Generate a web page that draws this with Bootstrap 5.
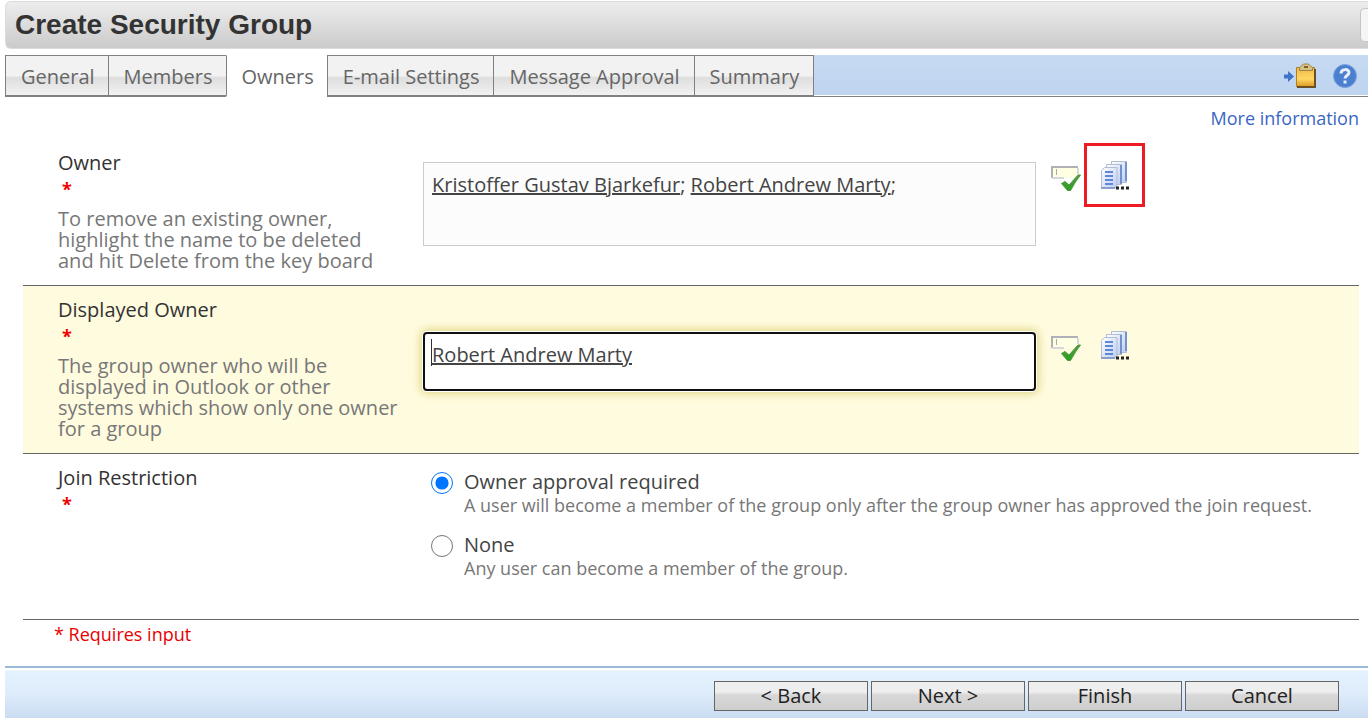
<!DOCTYPE html>
<html lang="en">
<head>
<meta charset="utf-8">
<meta name="viewport" content="width=device-width, initial-scale=1">
<title>Create Security Group</title>
<link href="https://cdn.jsdelivr.net/npm/bootstrap@5.3.0/dist/css/bootstrap.min.css" rel="stylesheet">
<style>
  body { font-family: "Segoe UI", "Open Sans", "Noto Sans", sans-serif; font-size: 20px; line-height: 21px; color: #333; background: #fff; }
  .title-bar { margin: 1px 0 0 5px; height: 48px; border: 1px solid #dcdcdc; border-right: 0; border-radius: 6px 0 0 6px; background: linear-gradient(#ededed, #cbcbcb); }
  .title-bar h1 { font: bold 28px/46px "Liberation Sans", Arial, sans-serif; color: #333; padding-left: 9px; }
  .edge-btn { width: 8px; height: 34px; background: #f5f5f5; border: 1px solid #c4c4c4; border-right: 0; border-radius: 5px 0 0 5px; }
  .tab-strip { margin: 6px 0 0 5px; height: 42px; background: linear-gradient(#c6daf3, #bfd4ef 90%); border-bottom: 1px solid #808080; box-shadow: inset 0 -1px #fff; }
  .tab-strip .nav-link { height: 42px; padding: 0 14px 0 15px; border: 1px solid #808080; border-right: 0; border-bottom-width: 2px; border-radius: 0; font-size: 20px; line-height: 42px; color: #666; white-space: nowrap; background: linear-gradient(#f2f2f2 50%, #dedede 56%, #f2f2f2); }
  .tab-strip .short .nav-link { padding-right: 13px; }
  .tab-strip .nav-item:last-child .nav-link { border-right: 1px solid #808080; }
  .tab-strip .nav-link.active { background: #fff; border-top-color: #fff; border-bottom-color: #fff; }
  .tab-tools { gap: 16px; padding-right: 11px; }
  .icon-btn { border: 0; background: none; padding: 0; line-height: 0; }
  .more-info { height: 42px; line-height: 42px; font-size: 18px; padding-right: 9px; }
  .more-info a { color: #3a66c4; text-decoration: none; }
  .form-rows { margin: 0 9px 0 23px; }
  .form-item { border-bottom: 1px solid #666; }
  .form-item.current { background: #fffbdf; }
  .item-label { flex: 0 0 400px; padding: 13px 24px 14px 35px; }
  .star { color: #f00000; font: bold 18px/32px "Open Sans", sans-serif; margin-bottom: 3px; padding-left: 4px; }
  .hint { color: #777; }
  .picker { padding: 4px 16% 0 0; }
  .current .picker { padding-top: 27px; }
  .field { margin-top: 19px; padding: 11px 8px; height: 84px; border: 1px solid #ccc; background: #fcfcfc; color: #444; }
  .current .field { height: 59px; padding: 10px 7px; border: 2px solid #101010; border-radius: 4px; background: #fff; box-shadow: 0 0 0 1px #fff, 0 0 9px 3px #e2d98a; outline: 0; resize: none; overflow: hidden; text-decoration: underline; display: block; width: 100%; }
  .caret { left: 8px; top: 26px; width: 1px; height: 27px; background: #333; }
  .check-btn { margin: 22px 0 0 15px; height: 28px; }
  .pick-btn { margin-left: 3px; width: 61px; height: 64px; border: 3px solid transparent; }
  .pick-btn.marked { border-color: #ed1c24; }
  .choices { padding: 17px 16px 22px 8px; }
  .choices input { width: 22px; height: 22px; margin: 1px 0 0; accent-color: #0075ff; }
  .choice { gap: 0 11px; height: 63px; }
  .choice label { color: #444; line-height: 22px; }
  .choice p { margin: 2px 0 0; font-size: 18px; color: #777; line-height: 21px; }
  .required-note { color: #e80000; font-size: 18px; line-height: 28px; padding-left: 31px; }
  .button-bar { margin-left: 5px; height: 52px; padding: 6px 29px 0 0; gap: 3px; border-top: 2px solid #9db9da; background: linear-gradient(#fff 2px, #e4f1fe 3px, #deecfb 50%, #cbdcf2); }
  .button-bar .btn { width: 154px; height: 30px; padding: 0; border: 1px solid #666; border-radius: 0; font-size: 20px; line-height: 28px; color: #222; background: linear-gradient(#eee 36%, #d8d8d8 46%, #cecece); }
</style>
</head>
<body class="d-flex flex-column min-vh-100">
<svg width="0" height="0" class="position-absolute" aria-hidden="true">
  <defs>
    <linearGradient id="pageFill" x1="0" y1="0" x2="1" y2="1"><stop stop-color="#fff"/><stop offset="1" stop-color="#bccdf0"/></linearGradient>
    <linearGradient id="tickFill" x1="0" y1="0" x2="0" y2="1"><stop stop-color="#5a9a4c"/><stop offset="1" stop-color="#28a01c"/></linearGradient>
    <linearGradient id="boardFill" x1="0" y1="0" x2="0" y2="1"><stop stop-color="#f0b945"/><stop offset=".6" stop-color="#ffd764"/><stop offset="1" stop-color="#dc9a22"/></linearGradient>
    <symbol id="check" viewBox="0 0 30 28">
      <path d="M1 2h26v11H1z" fill="#ffffe4"/>
      <path d="M1 13V2h26" fill="none" stroke="#b0b0b6" stroke-width="2"/>
      <path d="M1 13h12M27 3v6" fill="none" stroke="#d8d8dc" stroke-width="2"/>
      <path d="M5.500 4v6" stroke="#aaa"/>
      <path d="M10.500 18.500 14 16.500l4 3.500 9-10h2.500l-5 7-5 8.500h-3z" fill="url(#tickFill)" stroke="#4b9a40"/>
    </symbol>
    <symbol id="pages" viewBox="0 0 30 30">
      <g fill="url(#pageFill)" stroke="#b3bdd4"><path d="M11.500 1.500h15v21h-15z"/><path d="M6.500 4.500h15v20h-15z"/></g>
      <path d="M26 2v19M21 5v19" stroke="#7391cb" stroke-width="2"/>
      <path d="M4.500 7.500h12.500v20H1.500v-17z" fill="url(#pageFill)" stroke="#b0bcd8"/>
      <path d="M5 12h8M5 16h8M5 20h8M5 24h8" stroke="#5f89d8" stroke-width="2"/>
      <path d="M1 28h14" stroke="#8a9dcb" stroke-width="2"/>
      <path d="M16 26.500h3v3h-3zM21 26.500h3v3h-3zM26 26.500h3v3h-3z" fill="#222"/>
    </symbol>
  </defs>
</svg>

<header class="title-bar d-flex align-items-center justify-content-between">
  <h1 class="m-0">Create Security Group</h1>
  <button type="button" class="edge-btn p-0" aria-label="Account menu"></button>
</header>

<nav class="tab-strip d-flex justify-content-between" aria-label="Wizard pages">
  <ul class="nav flex-nowrap">
    <li class="nav-item short"><a class="nav-link" href="#general">General</a></li>
    <li class="nav-item short"><a class="nav-link" href="#members">Members</a></li>
    <li class="nav-item short"><a class="nav-link active" aria-current="page" href="#owners">Owners</a></li>
    <li class="nav-item"><a class="nav-link" href="#email">E-mail Settings</a></li>
    <li class="nav-item"><a class="nav-link" href="#approval">Message Approval</a></li>
    <li class="nav-item"><a class="nav-link" href="#summary">Summary</a></li>
  </ul>
  <div class="tab-tools d-flex align-items-center">
    <button type="button" class="icon-btn" aria-label="Add to clipboard">
      <svg width="34" height="26" viewBox="0 0 34 26">
        <path d="M1 11.500h4V8l6 5.500L5 19v-3.500H1z" fill="#3d73c9"/>
        <path d="M13.500 4.500h18v19h-18z" fill="url(#boardFill)" stroke="#b07f2c"/>
        <path d="M14 24h18V6" fill="none" stroke="#6b5026" stroke-width="2"/>
        <path d="M16.500 7.500v-3l2-1.500 2-2h5l2 2 2 1.500v3z" fill="#d6c184" stroke="#9c8444"/>
        <path d="M21 4h4" stroke="#7b652d" stroke-width="2"/>
      </svg>
    </button>
    <button type="button" class="icon-btn" aria-label="Help">
      <svg width="24" height="26" viewBox="0 0 24 26">
        <circle cx="12" cy="13" r="11.500" fill="#4b7fd0" stroke="#7fa3dc"/>
        <path d="M8 10.500c0-5 8-5 8-1 0 3-4 3-4 6" fill="none" stroke="#e8effb" stroke-width="3"/>
        <path d="M10.500 17.500h3v3h-3z" fill="#e8effb"/>
      </svg>
    </button>
  </div>
</nav>

<main>
  <div class="more-info text-end"><a href="#more">More information</a></div>
  <form class="form-rows">
    <div class="form-item d-flex">
      <div class="item-label">
        <div id="owner-label">Owner</div>
        <div class="star">*</div>
        <div class="hint" id="owner-hint">To remove an existing owner, highlight the name to be deleted and hit Delete from the key board</div>
      </div>
      <div class="picker d-flex flex-grow-1 align-items-start">
        <div class="field flex-grow-1" role="textbox" contenteditable="true" aria-multiline="true" aria-labelledby="owner-label" aria-describedby="owner-hint"><u>Kristoffer Gustav Bjarkefur</u>; <u>Robert Andrew Marty</u>;</div>
        <button type="button" class="icon-btn check-btn" aria-label="Check names"><svg width="30" height="28"><use href="#check"/></svg></button>
        <button type="button" class="icon-btn pick-btn marked" aria-label="Browse owners"><svg width="30" height="30"><use href="#pages"/></svg></button>
      </div>
    </div>

    <div class="form-item current d-flex">
      <div class="item-label">
        <label class="d-block" for="displayed">Displayed Owner</label>
        <div class="star">*</div>
        <div class="hint">The group owner who will be displayed in Outlook or other systems which show only one owner for a group</div>
      </div>
      <div class="picker d-flex flex-grow-1 align-items-start">
        <div class="position-relative flex-grow-1">
          <textarea class="field" id="displayed" spellcheck="false">Robert Andrew Marty</textarea>
          <span class="caret position-absolute"></span>
        </div>
        <button type="button" class="icon-btn check-btn" aria-label="Check name"><svg width="30" height="28"><use href="#check"/></svg></button>
        <button type="button" class="icon-btn pick-btn" aria-label="Browse displayed owner"><svg width="30" height="30"><use href="#pages"/></svg></button>
      </div>
    </div>

    <div class="form-item d-flex">
      <div class="item-label">
        <div id="join-label">Join Restriction</div>
        <div class="star">*</div>
      </div>
      <div class="choices flex-grow-1" role="radiogroup" aria-labelledby="join-label">
        <div class="choice d-flex align-items-start">
          <input type="radio" name="join" id="approval-required" checked>
          <div><label class="d-block" for="approval-required">Owner approval required</label>
          <p>A user will become a member of the group only after the group owner has approved the join request.</p></div>
        </div>
        <div class="choice d-flex align-items-start">
          <input type="radio" name="join" id="approval-none">
          <div><label class="d-block" for="approval-none">None</label>
          <p>Any user can become a member of the group.</p></div>
        </div>
      </div>
    </div>
    <div class="required-note">* Requires input</div>
  </form>
</main>

<footer class="button-bar d-flex align-items-center justify-content-end mt-auto">
  <button type="button" class="btn">&lt; Back</button>
  <button type="button" class="btn">Next &gt;</button>
  <button type="button" class="btn">Finish</button>
  <button type="button" class="btn">Cancel</button>
</footer>
<script src="https://cdn.jsdelivr.net/npm/bootstrap@5.3.0/dist/js/bootstrap.bundle.min.js"></script>
</body>
</html>
